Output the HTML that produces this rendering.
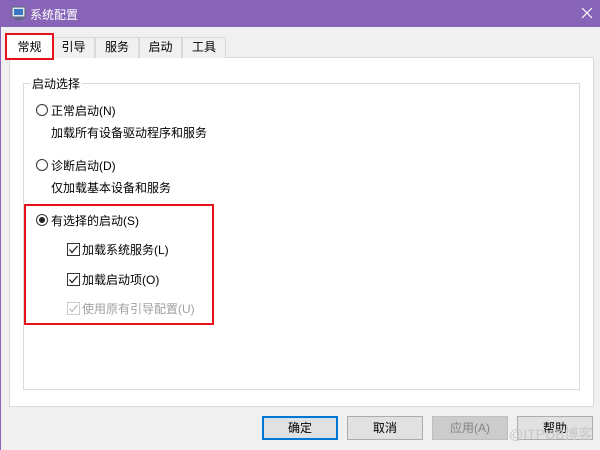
<!DOCTYPE html>
<html><head><meta charset="utf-8"><style>
*{margin:0;padding:0;box-sizing:border-box}
body{width:600px;height:450px;background:#f0f0f0;position:relative;overflow:hidden;font-family:"Liberation Sans","Noto Sans CJK SC",sans-serif;font-size:12px;color:#000;border-left:1px solid #8764b8}
.abs{position:absolute}
.title{left:0;top:0;width:600px;height:27px;background:#8764b8;color:#fff}
.tab{top:37px;height:21px;background:#f0f0f0;border:1px solid #d9d9d9;border-bottom:none;line-height:19px;text-align:center;font-size:12px}
.panel{left:8px;top:57px;width:585px;height:350px;background:#fff;border:1px solid #d9d9d9}
.group{left:22px;top:83px;width:557px;height:307px;border:1px solid #dcdcdc}
.radio{width:12px;height:12px;border:1px solid #333;border-radius:50%;background:#fff}
.chk{width:13px;height:13px;border:1px solid #333;background:#fff}
.btn{top:416px;width:76px;height:24px;background:#e1e1e1;border:1px solid #adadad;text-align:center;line-height:22px}
.red{border:2px solid #e8101a}
</style></head><body>
<div class="abs title">
<svg class="abs" style="left:10px;top:5px" width="16" height="16"><rect x="1" y="2" width="13" height="10" fill="#dfe6ee" stroke="#56677a"/><rect x="3" y="4" width="9" height="6" fill="#3a75c4"/><rect x="4" y="13" width="8" height="2" fill="#56677a"/></svg>
<span class="abs" style="left:29px;top:6px;font-size:12px">系统配置</span>
<svg class="abs" style="left:580px;top:7px" width="12" height="12"><path d="M1 1L11 11M11 1L1 11" stroke="#fff" stroke-width="1.2"/></svg>
</div>
<div class="abs panel"></div>
<div class="abs tab" style="left:51px;width:43px">引导</div>
<div class="abs tab" style="left:94px;width:44px">服务</div>
<div class="abs tab" style="left:138px;width:43px">启动</div>
<div class="abs tab" style="left:181px;width:44px">工具</div>
<div class="abs tab" style="left:5px;top:34px;height:25px;width:47px;background:#fff;line-height:24px">常规</div>
<div class="abs red" style="left:4px;top:33px;width:49px;height:27px"></div>
<div class="abs group"></div>
<span class="abs" style="left:29px;top:75px;background:#fff;padding:0 2px">启动选择</span>
<div class="abs radio" style="left:35px;top:104px"></div>
<span class="abs" style="left:50px;top:102px">正常启动(N)</span>
<span class="abs" style="left:50px;top:124px">加载所有设备驱动程序和服务</span>
<div class="abs radio" style="left:35px;top:159px"></div>
<span class="abs" style="left:50px;top:157px">诊断启动(D)</span>
<span class="abs" style="left:50px;top:179px">仅加载基本设备和服务</span>
<div class="abs radio" style="left:35px;top:214px"></div>
<div class="abs" style="left:38px;top:217px;width:6px;height:6px;border-radius:50%;background:#222"></div>
<span class="abs" style="left:50px;top:212px">有选择的启动(S)</span>
<div class="abs chk" style="left:66px;top:243px"></div>
<svg class="abs" style="left:66px;top:243px" width="13" height="13"><path d="M2.5 6.5L5 9.5L10.5 3" fill="none" stroke="#222" stroke-width="1.3"/></svg>
<span class="abs" style="left:81px;top:241px">加载系统服务(L)</span>
<div class="abs chk" style="left:66px;top:273px"></div>
<svg class="abs" style="left:66px;top:273px" width="13" height="13"><path d="M2.5 6.5L5 9.5L10.5 3" fill="none" stroke="#222" stroke-width="1.3"/></svg>
<span class="abs" style="left:81px;top:271px">加载启动项(O)</span>
<div class="abs chk" style="left:66px;top:302px;border-color:#ccc"></div>
<svg class="abs" style="left:66px;top:302px" width="13" height="13"><path d="M2.5 6.5L5 9.5L10.5 3" fill="none" stroke="#bbb" stroke-width="1.3"/></svg>
<span class="abs" style="left:81px;top:300px;color:#a0a0a0">使用原有引导配置(U)</span>
<div class="abs red" style="left:23px;top:204px;width:190px;height:121px"></div>
<div class="abs btn" style="left:261px;border:2px solid #0078d7;line-height:20px">确定</div>
<div class="abs btn" style="left:346px">取消</div>
<div class="abs btn" style="left:431px;background:#cccccc;border-color:#bfbfbf;color:#838383">应用(A)</div>
<div class="abs btn" style="left:516px">帮助</div>
<span class="abs" style="left:508px;top:424px;color:#c8c8c8;font-size:14px">@ITPUB博客</span>
</body></html>
